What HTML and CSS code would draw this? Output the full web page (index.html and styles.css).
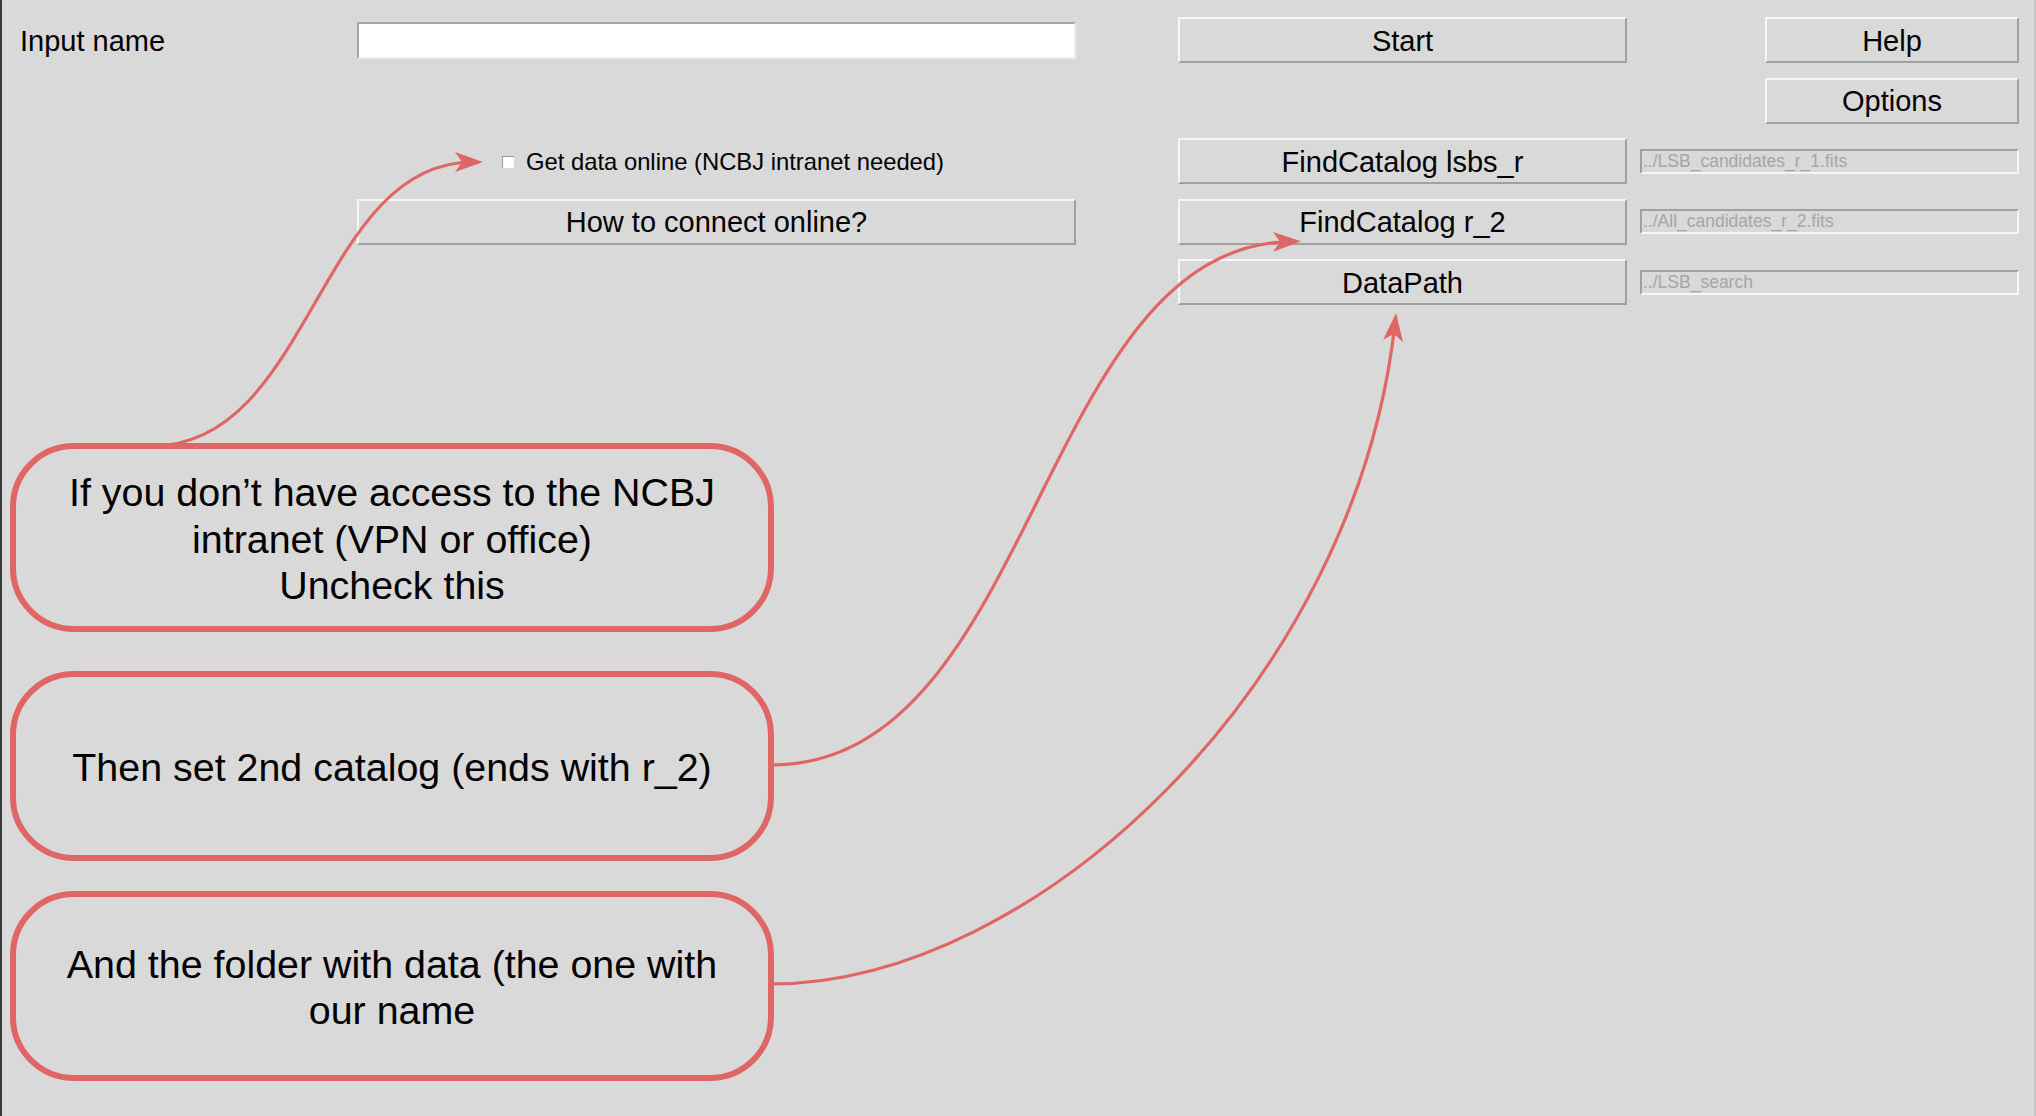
FILE: index.html
```html
<!DOCTYPE html>
<html>
<head>
<meta charset="utf-8">
<title>LSB search</title>
<link rel="stylesheet" href="styles.css">
</head>
<body>
<div class="app">
  <div class="panel">
    <div class="label r1 c1">Input name</div>
    <input class="entry r1 c2" type="text" value="">
    <button class="btn r1 c3">Start</button>
    <button class="btn narrow r1 c4">Help</button>
    <button class="btn narrow r2 c4">Options</button>

    <label class="check r3 c2"><span class="box"></span><span>Get data online (NCBJ intranet needed)</span></label>
    <button class="btn r3 c3">FindCatalog lsbs_r</button>
    <input class="path r3 c4" type="text" value="../LSB_candidates_r_1.fits" readonly>

    <button class="btn r4 c2">How to connect online?</button>
    <button class="btn r4 c3">FindCatalog r_2</button>
    <input class="path r4 c4" type="text" value="../All_candidates_r_2.fits" readonly>

    <button class="btn r5 c3">DataPath</button>
    <input class="path r5 c4" type="text" value="../LSB_search" readonly>
  </div>

  <div class="notes">
    <div class="note n1">If you don’t have access to the NCBJ<br>intranet (VPN or office)<br>Uncheck this</div>
    <div class="note n2">Then set 2nd catalog (ends with r_2)</div>
    <div class="note n3">And the folder with data (the one with<br>our name</div>
  </div>
</div>

<svg class="arrows" viewBox="0 0 2036 1116" xmlns="http://www.w3.org/2000/svg">
  <defs>
    <marker id="head" markerUnits="userSpaceOnUse" markerWidth="28" markerHeight="20" viewBox="0 0 28 20" refX="18" refY="10" orient="auto">
      <path d="M0,0 L28,10 L0,20 L7,10 Z" fill="#e06666"/>
    </marker>
  </defs>
  <path class="arrow" d="M152,446 C312,446 318,162 473,162" marker-end="url(#head)"/>
  <path class="arrow" d="M771,765 C1037,765 1037,246 1291,241.5" marker-end="url(#head)"/>
  <path class="arrow" d="M771,984 C1036,984 1356,683 1395,323" marker-end="url(#head)"/>
</svg>
</body>
</html>
```

FILE: styles.css
```css
* { box-sizing: border-box; }

html, body {
  margin: 0;
  padding: 0;
}

body {
  width: 2036px;
  height: 1116px;
  overflow: hidden;
  position: relative;
  background: #d9d9d9;
  color: #000;
  font-family: "Liberation Sans", Arial, sans-serif;
}

.app {
  width: 2036px;
  height: 1116px;
  border-left: 2px solid #3a3a3a;
  border-right: 2px solid #c6c6c6;
}

.panel {
  display: grid;
  grid-template-columns: 337px 719px 102px 449px 13px 379px;
  grid-template-rows: repeat(5, 46px);
  row-gap: 14.6px;
  padding: 17px 0 0 18px;
}

.r1 { grid-row: 1; }
.r2 { grid-row: 2; }
.r3 { grid-row: 3; }
.r4 { grid-row: 4; }
.r5 { grid-row: 5; }
.c1 { grid-column: 1; }
.c2 { grid-column: 2; }
.c3 { grid-column: 4; }
.c4 { grid-column: 6; }

.label {
  align-self: center;
  padding-top: 1px;
  font-size: 29px;
  line-height: 34px;
}

.btn {
  display: flex;
  align-items: center;
  justify-content: center;
  height: 46px;
  margin: 0;
  padding: 2px 0 0;
  background: #d9d9d9;
  border: 2px solid;
  border-color: #f6f6f6 #a0a0a0 #a0a0a0 #f6f6f6;
  border-radius: 0;
  font-family: "Liberation Sans", Arial, sans-serif;
  font-size: 29px;
  color: #000;
}

.btn.narrow {
  justify-self: end;
  width: 254px;
}

.entry {
  align-self: center;
  height: 37px;
  margin: 0;
  background: #fff;
  border: 2px solid;
  border-color: #a6a6a6 #ececec #ececec #a6a6a6;
  outline: none;
}

.path {
  align-self: center;
  height: 25px;
  margin: 0;
  padding: 0 0 0 1px;
  background: #d9d9d9;
  border: 2px solid;
  border-color: #a0a0a0 #f6f6f6 #f6f6f6 #a0a0a0;
  font-family: "Liberation Sans", Arial, sans-serif;
  font-size: 17.5px;
  color: #a6a6a6;
  outline: none;
}

.check {
  display: flex;
  align-items: center;
  gap: 12px;
  padding-left: 145px;
  padding-top: 2px;
  font-size: 23.8px;
}

.box {
  width: 12px;
  height: 12px;
  background: #fff;
  border-top: 1px solid #999;
  border-left: 1px solid #999;
}

.notes {
  display: flex;
  flex-direction: column;
  margin-top: 137.6px;
  padding-left: 8px;
}

.note {
  width: 764px;
  height: 190px;
  display: flex;
  align-items: center;
  justify-content: center;
  text-align: center;
  padding-top: 3px;
  border: 6px solid #e06666;
  border-radius: 64px;
  font-size: 39.4px;
  line-height: 46.5px;
}

.n1 { height: 189px; }
.n2 { margin-top: 39px; }
.n3 { margin-top: 30px; }

.arrows {
  position: absolute;
  left: 0;
  top: 0;
  width: 2036px;
  height: 1116px;
  pointer-events: none;
}

.arrow {
  fill: none;
  stroke: #e06666;
  stroke-width: 3.2;
}
```
